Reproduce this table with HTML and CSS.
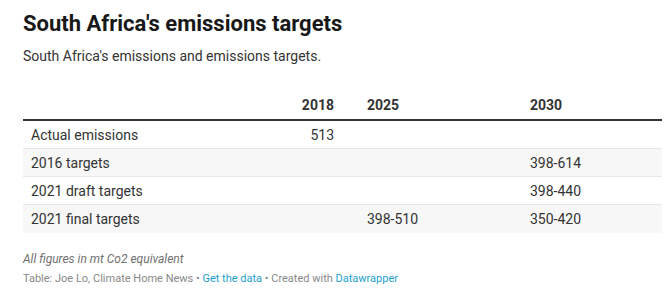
FILE: index.html
```html
<!DOCTYPE html>
<html lang="en">
<head>
<meta charset="utf-8">
<title>South Africa's emissions targets</title>
<link rel="stylesheet" href="styles.css">
</head>
<body>
<div class="chart">
  <h1 class="title">South Africa's emissions targets</h1>
  <p class="desc">South Africa's emissions and emissions targets.</p>
  <table class="tbl">
    <colgroup>
      <col class="c-label">
      <col class="c-2018">
      <col class="c-2025">
      <col class="c-2030">
    </colgroup>
    <thead>
      <tr>
        <th class="lab"></th>
        <th class="num">2018</th>
        <th class="txt">2025</th>
        <th class="txt">2030</th>
      </tr>
    </thead>
    <tbody>
      <tr><td class="lab">Actual emissions</td><td class="num">513</td><td class="txt"></td><td class="txt"></td></tr>
      <tr class="odd"><td class="lab">2016 targets</td><td class="num"></td><td class="txt"></td><td class="txt">398-614</td></tr>
      <tr><td class="lab">2021 draft targets</td><td class="num"></td><td class="txt"></td><td class="txt">398-440</td></tr>
      <tr class="odd"><td class="lab">2021 final targets</td><td class="num"></td><td class="txt">398-510</td><td class="txt">350-420</td></tr>
    </tbody>
  </table>
  <p class="notes">All figures in mt Co2 equivalent</p>
  <p class="source">Table: Joe Lo, Climate Home News • <a href="#">Get the data</a> • Created with <a href="#">Datawrapper</a></p>
</div>
</body>
</html>
```
FILE: styles.css
```css
html, body {
  margin: 0;
  padding: 0;
  background: #ffffff;
}
body {
  font-family: Roboto, "Liberation Sans", Arial, sans-serif;
  color: #333333;
}
.chart {
  padding: 10px 3px 0 23px;
}
.title {
  margin: 0;
  font-size: 22px;
  line-height: 27px;
  font-weight: 700;
  color: #181818;
}
.desc {
  margin: 9px 0 0;
  font-size: 14px;
  line-height: 20px;
  color: #333333;
}
.tbl {
  margin-top: 19px;
  width: 639px;
  table-layout: fixed;
  border-collapse: collapse;
  font-size: 14px;
}
.c-label { width: 260px; }
.c-2018 { width: 76px; }
.c-2025 { width: 163px; }
.c-2030 { width: 140px; }
.tbl th {
  font-weight: 700;
  color: #333333;
  height: 28px;
  padding: 0 8px 6px;
  vertical-align: bottom;
  border-bottom: 2px solid #333333;
}
.tbl td {
  height: 27px;
  padding: 0 8px;
  border-bottom: 1px solid #e6e6e6;
  color: #333333;
}
.tbl tbody tr:last-child td {
  border-bottom: none;
  height: 28px;
}
.tbl tr.odd td {
  background: #f7f7f7;
}
.tbl .num { text-align: right; padding-right: 25px; }
.txt { text-align: left; }
.lab { text-align: left; }
.notes {
  margin: 18px 0 0;
  font-size: 12px;
  line-height: 16px;
  font-style: italic;
  color: #707070;
}
.source {
  margin: 5px 0 0;
  font-size: 11px;
  line-height: 14px;
  color: #888888;
}
.source a {
  color: #1d9fd1;
  text-decoration: none;
}
```
